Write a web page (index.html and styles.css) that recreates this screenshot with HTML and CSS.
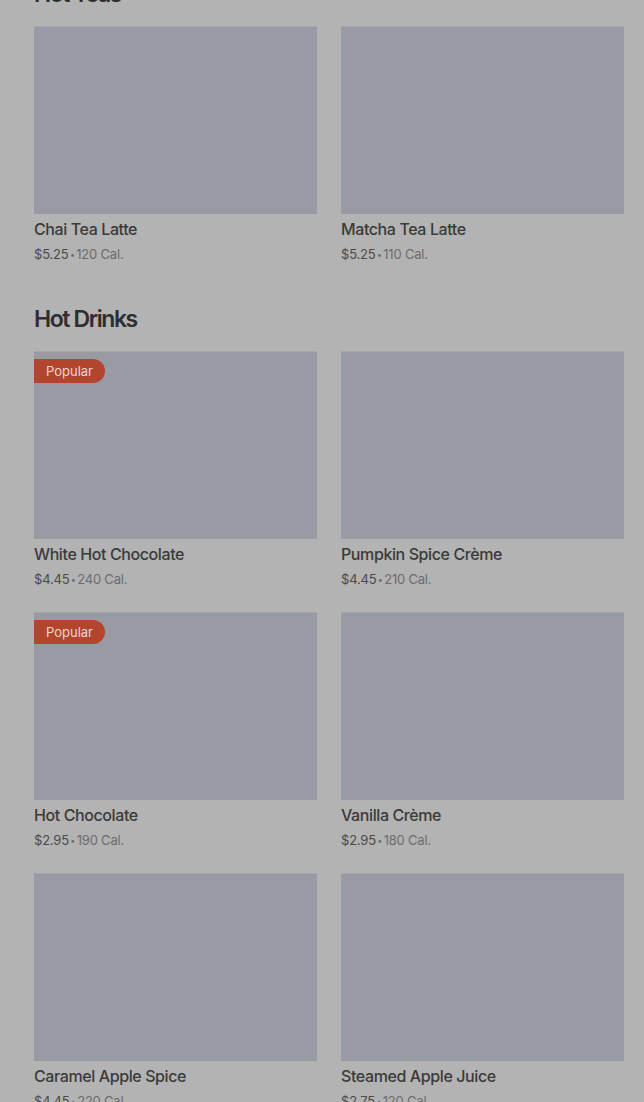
FILE: index.html
```html
<!DOCTYPE html>
<html>
  <head>
    <title>Menu</title>
    <link rel="stylesheet" href="styles.css">
  </head>
  <body>
    <main class="menu">
      <section class="menu-section">
        <h2>Hot Teas</h2>
        <div class="product-grid">
          <div class="product">
            <div class="product-image"></div>
            <div class="product-name">Chai Tea Latte</div>
            <div class="product-meta"><span class="price">$5.25</span> <span class="dot">•</span> 120 Cal.</div>
          </div>
          <div class="product">
            <div class="product-image"></div>
            <div class="product-name">Matcha Tea Latte</div>
            <div class="product-meta"><span class="price">$5.25</span> <span class="dot">•</span> 110 Cal.</div>
          </div>
        </div>
      </section>

      <section class="menu-section">
        <h2>Hot Drinks</h2>
        <div class="product-grid">
          <div class="product">
            <div class="product-image"><span class="badge">Popular</span></div>
            <div class="product-name">White Hot Chocolate</div>
            <div class="product-meta"><span class="price">$4.45</span> <span class="dot">•</span> 240 Cal.</div>
          </div>
          <div class="product">
            <div class="product-image"></div>
            <div class="product-name">Pumpkin Spice Crème</div>
            <div class="product-meta"><span class="price">$4.45</span> <span class="dot">•</span> 210 Cal.</div>
          </div>
          <div class="product">
            <div class="product-image"><span class="badge">Popular</span></div>
            <div class="product-name">Hot Chocolate</div>
            <div class="product-meta"><span class="price">$2.95</span> <span class="dot">•</span> 190 Cal.</div>
          </div>
          <div class="product">
            <div class="product-image"></div>
            <div class="product-name">Vanilla Crème</div>
            <div class="product-meta"><span class="price">$2.95</span> <span class="dot">•</span> 180 Cal.</div>
          </div>
          <div class="product">
            <div class="product-image"></div>
            <div class="product-name">Caramel Apple Spice</div>
            <div class="product-meta"><span class="price">$4.45</span> <span class="dot">•</span> 220 Cal.</div>
          </div>
          <div class="product">
            <div class="product-image"></div>
            <div class="product-name">Steamed Apple Juice</div>
            <div class="product-meta"><span class="price">$2.75</span> <span class="dot">•</span> 120 Cal.</div>
          </div>
        </div>
      </section>
    </main>
  </body>
</html>
```

FILE: styles.css
```css
body {
  margin: 0;
  background: #b3b3b3;
  font-family: Inter, "Noto Sans", sans-serif;
  overflow: hidden;
}

.menu {
  margin-top: -20px;
  padding: 0 20px 0 34px;
}

.menu-section {
  margin-bottom: 41px;
}

.menu-section h2 {
  margin: 0 0 18px;
  font-size: 23px;
  line-height: 28px;
  font-weight: 600;
  letter-spacing: -1.4px;
  color: #2e2e2e;
}

.product-grid {
  display: grid;
  grid-template-columns: 1fr 1fr;
  column-gap: 24px;
  row-gap: 23px;
}

.product-image {
  position: relative;
  height: 188px;
  background: #989ba3;
  box-shadow: inset 0 1px 0 #a3a6ae;
}

.badge {
  position: absolute;
  top: 8px;
  left: 0;
  height: 24px;
  padding: 0 12px;
  border-radius: 0 12px 12px 0;
  background: #b3452f;
  color: #ead6cf;
  font-size: 13px;
  line-height: 24px;
}

.product-name {
  margin-top: 5px;
  font-size: 16px;
  line-height: 20px;
  font-weight: 500;
  letter-spacing: -0.4px;
  color: #3a3a3a;
}

.product-meta {
  margin-top: 5px;
  height: 20px;
  font-size: 13px;
  line-height: 20px;
  letter-spacing: -0.2px;
  color: #6c6c6c;
}

.product-meta .price {
  color: #4a4a4a;
}

.product-meta .dot {
  font-size: 9px;
  line-height: 0;
  margin: 0 -2px;
  vertical-align: 1px;
}
```
